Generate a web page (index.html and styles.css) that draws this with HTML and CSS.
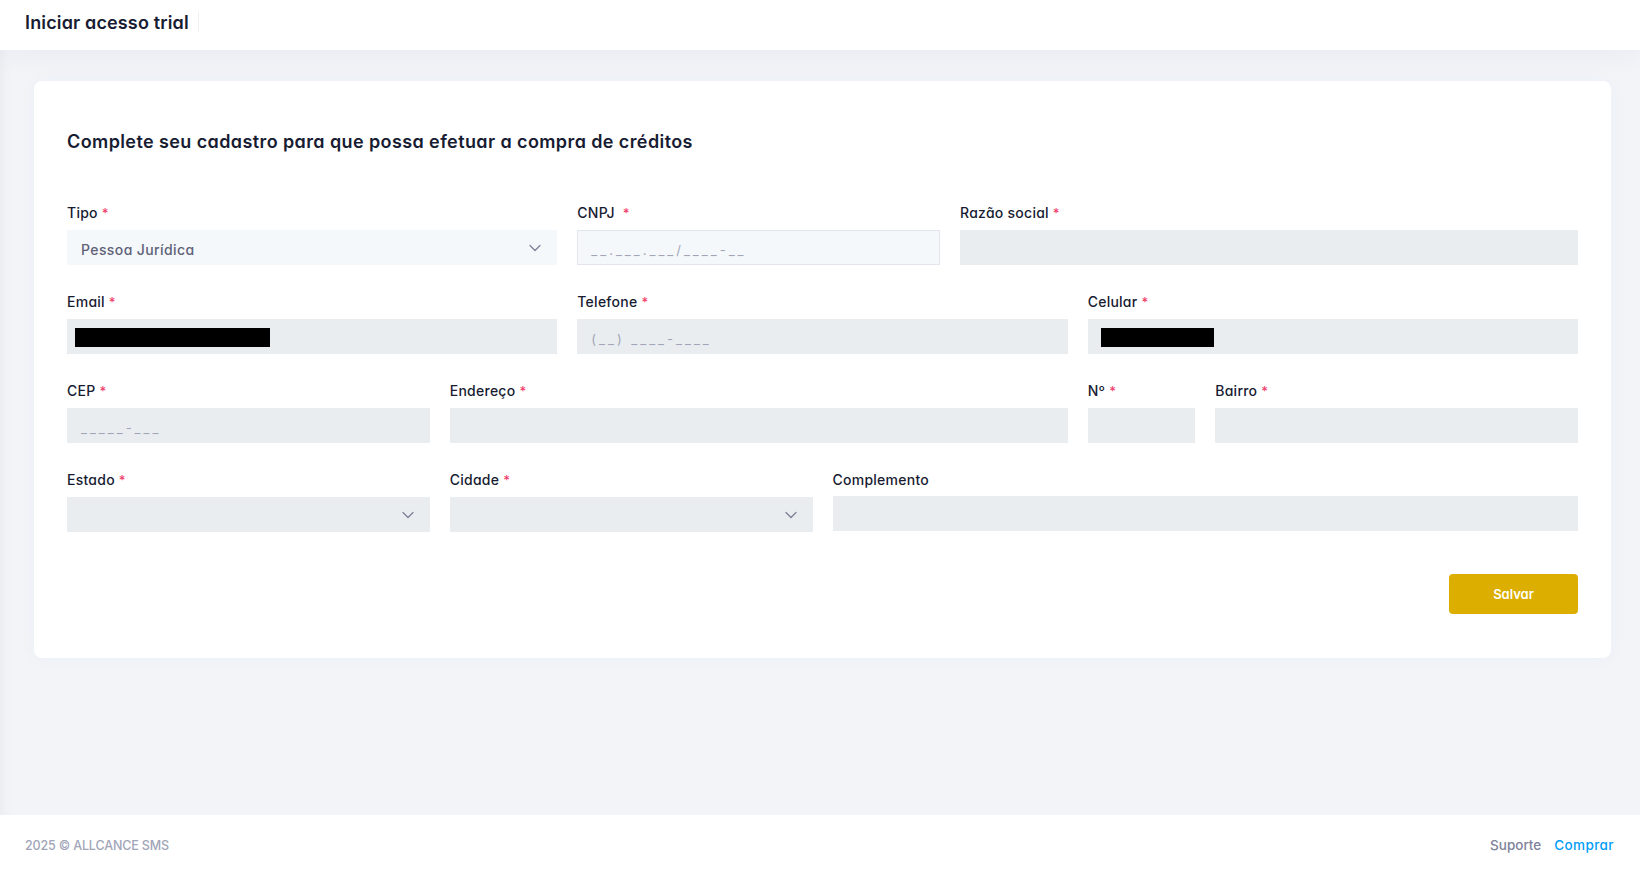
FILE: index.html
```html
<!DOCTYPE html>
<html lang="pt-BR">
<head>
<meta charset="utf-8">
<title>Iniciar acesso trial</title>
<link rel="stylesheet" href="styles.css">
</head>
<body>
<div class="app">
  <header class="header">
    <h1 class="page-title">Iniciar acesso trial</h1>
    <span class="title-divider"></span>
  </header>

  <main class="content">
    <section class="card">
      <h2 class="card-title">Complete seu cadastro para que possa efetuar a compra de créditos</h2>

      <form class="form-grid">
        <div class="field span-4">
          <label class="label">Tipo <span class="req">*</span></label>
          <div class="control select light">
            <span class="value">Pessoa Jurídica</span>
            <svg class="chevron" viewBox="0 0 12 8" width="12" height="8"><path d="M1 1.5l5 5 5-5" fill="none" stroke="currentColor" stroke-width="1.3" stroke-linecap="round" stroke-linejoin="round"/></svg>
          </div>
        </div>
        <div class="field span-3">
          <label class="label">CNPJ&nbsp; <span class="req">*</span></label>
          <div class="control bordered"><span class="placeholder">__.___.___/____-__</span></div>
        </div>
        <div class="field span-5">
          <label class="label">Razão social <span class="req">*</span></label>
          <div class="control disabled"></div>
        </div>

        <div class="field span-4">
          <label class="label">Email <span class="req">*</span></label>
          <div class="control disabled"><span class="redact redact-email"></span></div>
        </div>
        <div class="field span-4">
          <label class="label">Telefone <span class="req">*</span></label>
          <div class="control disabled"><span class="placeholder">(__) ____-____</span></div>
        </div>
        <div class="field span-4">
          <label class="label">Celular <span class="req">*</span></label>
          <div class="control disabled"><span class="redact redact-cel"></span></div>
        </div>

        <div class="field span-3">
          <label class="label">CEP <span class="req">*</span></label>
          <div class="control disabled"><span class="placeholder">_____-___</span></div>
        </div>
        <div class="field span-5">
          <label class="label">Endereço <span class="req">*</span></label>
          <div class="control disabled"></div>
        </div>
        <div class="field span-1">
          <label class="label">Nº <span class="req">*</span></label>
          <div class="control disabled"></div>
        </div>
        <div class="field span-3">
          <label class="label">Bairro <span class="req">*</span></label>
          <div class="control disabled"></div>
        </div>

        <div class="field span-3">
          <label class="label">Estado <span class="req">*</span></label>
          <div class="control select disabled">
            <svg class="chevron" viewBox="0 0 12 8" width="12" height="8"><path d="M1 1.5l5 5 5-5" fill="none" stroke="currentColor" stroke-width="1.3" stroke-linecap="round" stroke-linejoin="round"/></svg>
          </div>
        </div>
        <div class="field span-3">
          <label class="label">Cidade <span class="req">*</span></label>
          <div class="control select disabled">
            <svg class="chevron" viewBox="0 0 12 8" width="12" height="8"><path d="M1 1.5l5 5 5-5" fill="none" stroke="currentColor" stroke-width="1.3" stroke-linecap="round" stroke-linejoin="round"/></svg>
          </div>
        </div>
        <div class="field span-6">
          <label class="label">Complemento</label>
          <div class="control disabled"></div>
        </div>
      </form>

      <div class="actions">
        <button class="btn-save" type="button">Salvar</button>
      </div>
    </section>
  </main>

  <footer class="footer">
    <span class="copyright">2025 © ALLCANCE SMS</span>
    <nav class="footer-links">
      <a class="link-muted" href="#">Suporte</a>
      <a class="link-primary" href="#">Comprar</a>
    </nav>
  </footer>
</div>
</body>
</html>
```
FILE: styles.css
```css
* { box-sizing: border-box; }

html, body {
  margin: 0;
  padding: 0;
}

body {
  font-family: Inter, "Noto Sans", "DejaVu Sans", sans-serif;
  font-feature-settings: "cv11";
  background: #f2f4f8;
  color: #181c32;
  -webkit-font-smoothing: antialiased;
}

.app {
  display: flex;
  flex-direction: column;
  min-height: 873px;
  height: 873px;
  box-shadow: inset 12px 0 14px -12px rgba(0, 0, 0, 0.06);
}

.header {
  height: 50px;
  flex: 0 0 50px;
  background: #ffffff;
  display: flex;
  align-items: center;
  padding-left: 25px;
  padding-bottom: 6px;
  box-shadow: 0 8px 24px rgba(82, 63, 105, 0.04);
}

.page-title {
  margin: 0;
  font-size: 18px;
  font-weight: 600;
  letter-spacing: 0.15px;
  color: #181c32;
}

.title-divider {
  width: 1px;
  height: 20px;
  background: #eff2f5;
  margin-left: 9px;
}

.content {
  flex: 1;
  padding: 31px 29px 0 34px;
}

.card {
  background: #ffffff;
  border-radius: 8px;
  box-shadow: 0 0 20px rgba(76, 87, 125, 0.03);
  padding: 47px 33px 44px 33px;
}

.card-title {
  margin: 0 0 45px 0;
  font-size: 18px;
  line-height: 27px;
  font-weight: 600;
  letter-spacing: 0.4px;
  color: #181c32;
}

.form-grid {
  display: grid;
  grid-template-columns: repeat(12, 1fr);
  column-gap: 20px;
  row-gap: 24px;
}

.span-1 { grid-column: span 1; }
.span-3 { grid-column: span 3; }
.span-4 { grid-column: span 4; }
.span-5 { grid-column: span 5; }
.span-6 { grid-column: span 6; }

.field {
  display: flex;
  flex-direction: column;
}

.label {
  font-size: 14px;
  line-height: 21px;
  font-weight: 500;
  letter-spacing: 0.25px;
  color: #181c32;
  padding-top: 2px;
  margin-bottom: 6px;
}

.req {
  color: #f1416c;
  font-size: 13px;
}

.control {
  height: 35px;
  display: flex;
  align-items: center;
  padding: 0 14px;
  position: relative;
}

.control.disabled {
  background: #eaedf0;
}

.control.light {
  background: #f5f8fa;
}

.control.bordered {
  background: #f5f8fa;
  border: 1px solid #e4e6ef;
  padding-left: 13px;
}

.value {
  font-size: 14px;
  color: #5e6278;
  font-weight: 500;
  letter-spacing: 0.4px;
  padding-top: 4px;
}

.placeholder {
  font-size: 13px;
  color: #a1a5b7;
  letter-spacing: 3px;
  padding-top: 5px;
}

.select {
  justify-content: space-between;
}

.select .chevron {
  margin-left: auto;
  color: #7e8299;
  margin-right: 2px;
}

.redact {
  display: block;
  height: 19px;
  background: #000000;
  margin-top: 2px;
}

.redact-email { width: 195px; margin-left: -6px; }
.redact-cel { width: 113px; margin-left: -1px; }

.actions {
  display: flex;
  justify-content: flex-end;
  margin-top: 42px;
}

.btn-save {
  width: 129px;
  height: 40px;
  border: none;
  border-radius: 4px;
  background: #dbae00;
  color: #ffffff;
  font-family: inherit;
  font-feature-settings: "cv11";
  font-size: 13px;
  font-weight: 600;
  cursor: pointer;
}

.footer {
  height: 58px;
  flex: 0 0 58px;
  background: #ffffff;
  display: flex;
  align-items: center;
  justify-content: space-between;
  padding: 2px 26px 0 25px;
}

.copyright {
  font-size: 12.5px;
  font-weight: 500;
  letter-spacing: -0.15px;
  color: #a1a5b7;
}

.footer-links {
  display: flex;
  gap: 13px;
}

.footer-links a {
  font-size: 13.5px;
  font-weight: 500;
  text-decoration: none;
}

.link-muted { color: #7e8299; }
.link-primary { color: #009ef7; letter-spacing: 0.4px; }
```
